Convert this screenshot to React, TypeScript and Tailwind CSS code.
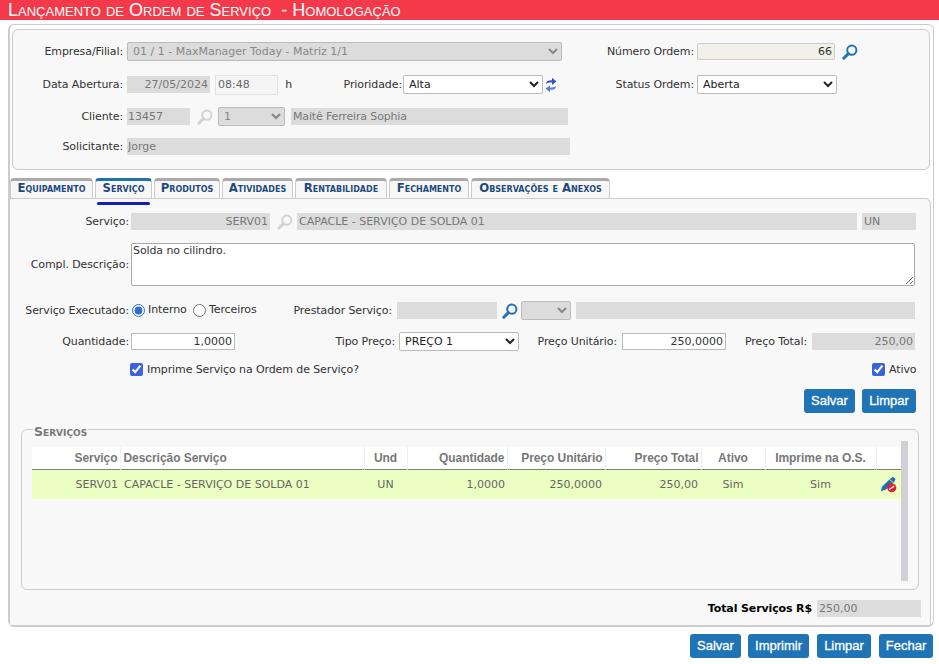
import React from "react";

const ui = "font-['DejaVu_Sans',sans-serif]";
const field = "h-[17px] shrink-0 bg-[#dcdcdc] text-[#777] text-[11px] px-[2px] outline-none " + ui;
const nativeSel = "h-[19px] shrink-0 text-[11px] rounded-[2px] border border-[#bbb] outline-none px-[1px] " + ui;
const plainLabel = "shrink-0 text-[11px] text-[#333] whitespace-nowrap tracking-[-0.1px] " + ui;
const labelCls = plainLabel + " text-right pt-[2px]";

function Search({ muted = false, className = "" }: { muted?: boolean; className?: string }) {
  const c = muted ? "#d2d2d2" : "#1f74b5";
  return (
    <svg viewBox="0 0 16 16" width="16" height="16" className={"shrink-0 " + className}>
      <circle cx="9.8" cy="6.2" r="4.6" fill="none" stroke={c} strokeWidth="2" />
      <path d="M6.4 9.6 L1.8 14.2" stroke={c} strokeWidth="3" strokeLinecap="round" />
    </svg>
  );
}

function Refresh() {
  return (
    <svg viewBox="0 0 12 16" width="12" height="16" className="shrink-0 ml-[2px]">
      <path d="M1 7 C1 4 3.5 3.2 7 3.2 L7 0.8 L11.5 4.4 L7 8 L7 5.6 C4.5 5.6 2.5 5.6 1 7Z" fill="#3557b7" />
      <path d="M11 9 C11 12 8.5 12.8 5 12.8 L5 15.2 L0.5 11.6 L5 8.4 L5 10.4 C7.5 10.4 9.5 10.4 11 9Z" fill="#5c7fd6" />
    </svg>
  );
}

function PenBlock() {
  return (
    <svg viewBox="0 0 17 17" width="17" height="17" className="inline-block">
      <path d="M0.8 15.2 L2 10.8 L10.5 2.5 L13 0.8 L15.5 3 L14.5 5.5 L6 13.5 Z" fill="#1f6fae" />
      <path d="M9.6 3.4 L13.4 6.8" stroke="#e8ffc0" strokeWidth="0.8" />
      <circle cx="11.8" cy="11.8" r="4.5" fill="#e3222f" />
      <path d="M9.2 13.6 L14.4 10" stroke="#fff" strokeWidth="1.2" />
    </svg>
  );
}

function Btn({ children, w }: { children: React.ReactNode; w: string }) {
  return (
    <button
      type="button"
      className={
        "h-[24px] shrink-0 rounded-[3px] bg-[#1f74b5] text-white text-[13px] [-webkit-text-stroke:0.3px_white] font-['Liberation_Sans',sans-serif] " + w
      }
    >
      {children}
    </button>
  );
}

function Tab({ children, w, active = false }: { children: React.ReactNode; w: string; active?: boolean }) {
  return (
    <div
      className={
        "relative h-[20px] shrink-0 flex items-center justify-center pb-[2px] rounded-t-[4px] border-x border-x-[#ccc] border-t-[3px] bg-[#f7f7f7] text-[11.7px] font-bold [font-variant:small-caps] text-[#1e4a7d] font-['DejaVu_Sans',sans-serif] " +
        (active ? "border-t-[#1f74a5] " : "border-t-[#aaa] ") +
        w
      }
    >
      {children}
      {active && <span className="absolute left-[1px] top-[21px] h-[3px] w-[53px] rounded-full bg-[#1020b8]" />}
    </div>
  );
}

const cols = ["w-[88px]", "w-[244px]", "w-[43px]", "w-[100px]", "w-[98px]", "w-[96px]", "w-[64px]", "w-[111px]", "w-[25px]"];

export default function App() {
  return (
    <div className="w-[939px] h-[664px] bg-white overflow-hidden">
      <div className="h-[20px] bg-[#f43a4a] pl-[8px] text-white text-[18.1px] leading-[20px] whitespace-pre [font-variant:small-caps] font-['Liberation_Sans',sans-serif]">
        {"Lançamento de Ordem de Serviço  - Homologação"}
      </div>

      <div className="ml-[8px] mt-[4px] w-[926px] h-[603px] rounded-[6px] border border-[#ccc] border-b-[2px] border-l-[2px] bg-white pt-[4px]">
        {/* header panel */}
        <div className="ml-[2px] w-[918px] h-[141px] rounded-[6px] border border-[#ccc] bg-[#f8f8f8] pt-[12px]">
          <div className="flex items-center h-[19px]">
            <span className={labelCls + " w-[110px]"}>Empresa/Filial:</span>
            <select disabled className={nativeSel + " ml-[4px] w-[435px] bg-[#dcdcdc] text-[#888]"}>
              <option>01 / 1 - MaxManager Today - Matriz 1/1</option>
            </select>
            <span className={labelCls + " w-[132px]"}>Número Ordem:</span>
            <input readOnly defaultValue="66" className={field + " ml-[3px] w-[138px] text-right !bg-[#f1f1e9] !text-[#333] border border-[#ccc] rounded-[2px]"} />
            <Search className="ml-[7px]" />
          </div>
          <div className="flex items-center h-[19px] mt-[14px]">
            <span className={labelCls + " w-[110px]"}>Data Abertura:</span>
            <input readOnly defaultValue="27/05/2024" className={field + " ml-[4px] w-[83px] text-right"} />
            <input readOnly defaultValue="08:48" className={"ml-[5px] h-[20px] w-[63px] shrink-0 bg-[#f5f5f5] border border-[#e2e2e2] px-[2px] text-[11px] text-[#666] outline-none " + ui} />
            <span className={labelCls + " ml-[6px] w-[8px]"}>h</span>
            <span className={labelCls + " w-[110px]"}>Prioridade:</span>
            <select defaultValue="Alta" className={nativeSel + " ml-[1px] w-[140px] bg-white text-[#222]"}>
              <option>Alta</option>
            </select>
            <Refresh />
            <span className={labelCls + " w-[137px]"}>Status Ordem:</span>
            <select defaultValue="Aberta" className={nativeSel + " ml-[3px] w-[140px] bg-white text-[#222]"}>
              <option>Aberta</option>
            </select>
          </div>
          <div className="flex items-center h-[19px] mt-[13px]">
            <span className={labelCls + " w-[110px]"}>Cliente:</span>
            <input readOnly defaultValue="13457" className={field + " ml-[4px] w-[63px] !px-[1px]"} />
            <Search muted className="ml-[7px]" />
            <select disabled className={nativeSel + " ml-[5px] w-[67px] bg-[#dcdcdc] text-[#888]"}>
              <option>1</option>
            </select>
            <input readOnly defaultValue="Maitê Ferreira Sophia" className={field + " ml-[6px] w-[277px] tracking-[-0.15px]"} />
          </div>
          <div className="flex items-center h-[19px] mt-[11px]">
            <span className={labelCls + " w-[110px]"}>Solicitante:</span>
            <input readOnly defaultValue="Jorge" className={field + " ml-[4px] w-[443px] !px-[1px]"} />
          </div>
        </div>

        {/* tabs */}
        <div className="relative z-10 flex gap-[2px] mt-[8px]">
          <Tab w="w-[83px]">Equipamento</Tab>
          <Tab w="w-[57px]" active>Serviço</Tab>
          <Tab w="w-[66px]">Produtos</Tab>
          <Tab w="w-[71px]">Atividades</Tab>
          <Tab w="w-[92px]">Rentabilidade</Tab>
          <Tab w="w-[80px]">Fechamento</Tab>
          <Tab w="w-[139px]">Observações e Anexos</Tab>
        </div>

        {/* service panel */}
        <div className="w-[921px] h-[427px] rounded-tr-[6px] border-t border-r border-[#ccc] bg-[#f8f8f8] pt-[13px]">
          <div className="flex items-center h-[19px]">
            <span className={labelCls + " w-[119px]"}>Serviço:</span>
            <input readOnly defaultValue="SERV01" className={field + " ml-[2px] w-[139px] text-right"} />
            <Search muted className="ml-[7px]" />
            <input readOnly defaultValue="CAPACLE - SERVIÇO DE SOLDA 01" className={field + " ml-[4px] w-[560px]"} />
            <input readOnly defaultValue="UN" className={field + " ml-[5px] w-[54px]"} />
          </div>
          <div className="flex items-center h-[43px] mt-[12px]">
            <span className={labelCls + " w-[119px]"}>Compl. Descrição:</span>
            <textarea readOnly defaultValue="Solda no cilindro." className={"ml-[2px] h-[43px] w-[784px] shrink-0 bg-white border border-[#aaa] rounded-[2px] px-[1px] text-[11px] leading-[14px] tracking-[-0.1px] text-[#333] outline-none " + ui} />
          </div>
          <div className="flex items-center h-[19px] mt-[15px]">
            <span className={labelCls + " w-[119px]"}>Serviço Executado:</span>
            <input type="radio" name="ex" defaultChecked className="ml-[3px] h-[13px] w-[13px] shrink-0 accent-[#2f6fd0]" />
            <span className={plainLabel + " ml-[3px] w-[41px]"}>Interno</span>
            <input type="radio" name="ex" className="ml-[4px] h-[13px] w-[13px] shrink-0" />
            <span className={plainLabel + " ml-[3px] w-[49px]"}>Terceiros</span>
            <span className={labelCls + " w-[134px]"}>Prestador Serviço:</span>
            <input readOnly className={field + " ml-[5px] w-[100px]"} />
            <Search className="ml-[5px]" />
            <select disabled className={nativeSel + " ml-[3px] w-[50px] bg-[#dcdcdc] text-[#888]"}>
              <option></option>
            </select>
            <input readOnly className={field + " ml-[5px] w-[339px]"} />
          </div>
          <div className="flex items-center h-[19px] mt-[12px]">
            <span className={labelCls + " w-[119px]"}>Quantidade:</span>
            <input readOnly defaultValue="1,0000" className={field + " ml-[2px] w-[104px] text-right !bg-white !text-[#333] border border-[#bbb]"} />
            <span className={labelCls + " w-[160px]"}>Tipo Preço:</span>
            <select defaultValue="PREÇO 1" className={nativeSel + " ml-[4px] w-[120px] bg-white text-[#222]"}>
              <option>PREÇO 1</option>
            </select>
            <span className={labelCls + " w-[98px]"}>Preço Unitário:</span>
            <input readOnly defaultValue="250,0000" className={field + " ml-[5px] w-[104px] text-right !bg-white !text-[#333] border border-[#bbb]"} />
            <span className={labelCls + " w-[81px]"}>Preço Total:</span>
            <input readOnly defaultValue="250,00" className={field + " ml-[5px] w-[103px] text-right"} />
          </div>
          <div className="flex items-center h-[14px] mt-[11px]">
            <input type="checkbox" defaultChecked className="ml-[120px] h-[13px] w-[13px] shrink-0 accent-[#3b63e0]" />
            <span className={labelCls + " ml-[4px] w-[212px] !text-left"}>Imprime Serviço na Ordem de Serviço?</span>
            <input type="checkbox" defaultChecked className="ml-[513px] h-[13px] w-[13px] shrink-0 accent-[#3b63e0]" />
            <span className={labelCls + " ml-[4px]"}>Ativo</span>
          </div>
          <div className="flex justify-end gap-[7px] mt-[13px] pr-[14px]">
            <Btn w="w-[51px]">Salvar</Btn>
            <Btn w="w-[54px]">Limpar</Btn>
          </div>

          <fieldset className="ml-[11px] mt-[7px] w-[898px] h-[170px] rounded-[6px] border border-[#ccc]">
            <legend className="ml-[11px] px-[1px] pt-[6px] text-[12.5px] leading-[12px] font-bold [font-variant:small-caps] text-[#777] font-['DejaVu_Sans',sans-serif]">Serviços</legend>
            <div className="flex pt-[3px] pl-[10px]">
              <table className="w-[869px] mt-[6px] table-fixed border-collapse self-start font-['Liberation_Sans',sans-serif]">
                <colgroup>
                  {cols.map((c) => (
                    <col key={c} className={c} />
                  ))}
                </colgroup>
                <thead>
                  <tr className="h-[22px] bg-white border-b border-b-[#808070] text-[12px] font-bold text-[#777] tracking-[-0.05px]">
                    <th className="text-right pr-[2px] font-bold">Serviço</th>
                    <th className="text-left pl-[3px] font-bold border-l border-l-[#eee]">Descrição Serviço</th>
                    <th className="text-center font-bold border-l border-l-[#eee]">Und</th>
                    <th className="text-right pr-[2px] font-bold border-l border-l-[#eee]">Quantidade</th>
                    <th className="text-right pr-[2px] font-bold border-l border-l-[#eee]">Preço Unitário</th>
                    <th className="text-right pr-[2px] font-bold border-l border-l-[#eee]">Preço Total</th>
                    <th className="text-center font-bold border-l border-l-[#eee]">Ativo</th>
                    <th className="text-center font-bold border-l border-l-[#eee]">Imprime na O.S.</th>
                    <th className="border-l border-l-[#eee]"></th>
                  </tr>
                </thead>
                <tbody>
                  <tr className={"h-[30px] bg-[#ebffc2] text-[11px] text-[#666] " + ui}>
                    <td className="text-right pr-[2px] pt-[2px]">SERV01</td>
                    <td className="text-left pl-[4px] pt-[2px]">CAPACLE - SERVIÇO DE SOLDA 01</td>
                    <td className="text-center pt-[2px]">UN</td>
                    <td className="text-right pr-[2px] pt-[2px]">1,0000</td>
                    <td className="text-right pr-[3px] pt-[2px]">250,0000</td>
                    <td className="text-right pr-[3px] pt-[2px]">250,00</td>
                    <td className="text-center pt-[2px]">Sim</td>
                    <td className="text-center pt-[2px]">Sim</td>
                    <td className="text-center align-middle leading-none"><PenBlock /></td>
                  </tr>
                </tbody>
              </table>
              <div className="h-[140px] w-[7px] shrink-0 bg-[#cfcfd4]" />
            </div>
          </fieldset>

          <div className="flex items-center justify-end h-[17px] mt-[10px] pr-[9px]">
            <span className={"shrink-0 text-[11px] font-bold text-black tracking-[-0.12px] pt-[2px] " + ui}>Total Serviços R$</span>
            <input readOnly defaultValue="250,00" className={field + " ml-[5px] w-[104px]"} />
          </div>
        </div>
      </div>

      <div className="flex justify-end gap-[7px] mt-[7px] pr-[6px]">
        <Btn w="w-[51px]">Salvar</Btn>
        <Btn w="w-[61px]">Imprimir</Btn>
        <div className="ml-[1px] flex"><Btn w="w-[54px]">Limpar</Btn></div>
        <div className="ml-[1px] flex"><Btn w="w-[54px]">Fechar</Btn></div>
      </div>
    </div>
  );
}
